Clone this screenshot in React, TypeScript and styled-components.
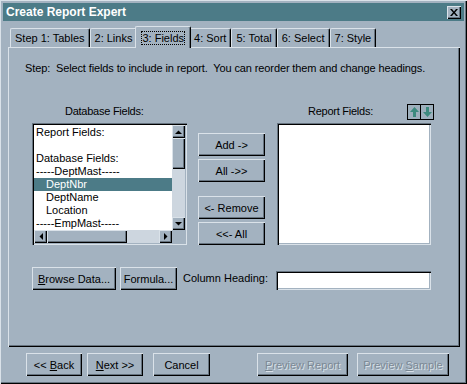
import React from "react";
import styled, { createGlobalStyle } from "styled-components";

const BG = "#a3b2c0";
const LIGHT = "#dae2e9";
const DARK = "#66737f";
const TEAL = "#4c7b87";

const GlobalStyle = createGlobalStyle`
  body {
    margin: 0;
    background: ${BG};
    font-family: "Liberation Sans", Arial, sans-serif;
    font-size: 11px;
    color: #000;
  }
`;

const Window = styled.div`
  width: 467px;
  height: 384px;
  box-sizing: border-box;
  padding: 3px;
  background: ${BG};
  box-shadow: inset 1px 1px ${LIGHT}, inset -1px -1px #000, inset -2px -2px ${DARK};
  display: flex;
  flex-direction: column;
`;

const TitleBar = styled.div`
  height: 18px;
  background: ${TEAL};
  color: #fff;
  font-weight: bold;
  font-size: 12px;
  display: flex;
  align-items: center;
  justify-content: space-between;
  padding: 0 3px 0 3px;
`;

const CloseBox = styled.div`
  width: 14px;
  height: 13px;
  background: ${BG};
  box-shadow: inset 1px 1px ${LIGHT}, inset -1px -1px #000, inset -2px -2px ${DARK};
  display: flex;
  align-items: center;
  justify-content: center;
`;

const Body = styled.div`
  padding: 5px 4px 0 5px;
  display: flex;
  flex-direction: column;
`;

const TabRow = styled.div`
  display: flex;
  height: 21px;
  padding-left: 2px;
`;

const Tab = styled.div<{ $active?: boolean }>`
  position: relative;
  z-index: ${(p) => (p.$active ? 1 : 0)};
  height: ${(p) => (p.$active ? 21 : 18)}px;
  margin: ${(p) => (p.$active ? "0 -2px -1px -2px" : "2px 0 0 0")};
  padding: 0 ${(p) => (p.$active ? 6 : 4)}px;
  background: ${BG};
  border-top: 1px solid ${LIGHT};
  border-left: 1px solid ${LIGHT};
  border-right: 1px solid #000;
  box-shadow: inset -1px 0 ${DARK};
  border-radius: 2px 2px 0 0;
  display: flex;
  align-items: center;
  font-size: 11px;
  white-space: nowrap;
`;

const Focus = styled.span`
  outline: 1px dotted #000;
  outline-offset: 0;
  line-height: 12px;
`;

const Panel = styled.div`
  width: 452px;
  height: 300px;
  box-sizing: border-box;
  padding: 15px 0 0 17px;
  box-shadow: inset 1px 1px ${LIGHT}, inset -1px -1px #000, inset -2px -2px ${DARK};
`;

const StepText = styled.div`
  line-height: 13px;
  white-space: pre;
  letter-spacing: -0.12px;
`;

const MainRow = styled.div`
  display: flex;
  margin: 29px 0 0 7px;
`;

const Column = styled.div<{ $w: number }>`
  width: ${(p) => p.$w}px;
  display: flex;
  flex-direction: column;
`;

const LabelRow = styled.div<{ $pad?: number }>`
  height: 15px;
  margin-bottom: 4px;
  display: flex;
  align-items: center;
  padding-left: ${(p) => p.$pad ?? 0}px;
`;

const Label = styled.span`
  line-height: 13px;
  letter-spacing: -0.25px;
`;

const ListBox = styled.div`
  height: 122px;
  box-sizing: border-box;
  padding: 2px;
  background: #fff;
  box-shadow: inset 1px 1px ${DARK}, inset 2px 2px #000, inset -1px -1px ${LIGHT}, inset -2px -2px ${BG};
  display: grid;
  grid-template-columns: 1fr 13px;
  grid-template-rows: 1fr 13px;
`;

const Items = styled.div`
  overflow: hidden;
  padding-top: 1px;
`;

const Item = styled.div<{ $indent?: boolean; $selected?: boolean }>`
  height: 13px;
  line-height: 13px;
  padding-left: ${(p) => (p.$indent ? 12 : 2)}px;
  background: ${(p) => (p.$selected ? TEAL : "transparent")};
  color: ${(p) => (p.$selected ? "#fff" : "#000")};
  white-space: nowrap;
`;

const VScroll = styled.div`
  display: flex;
  flex-direction: column;
  background: #cdd6df;
`;

const HScroll = styled.div`
  display: flex;
  background: #cdd6df;
`;

const Corner = styled.div`
  background: ${BG};
`;

const ScrollBtn = styled.div`
  width: 13px;
  height: 13px;
  flex: none;
  box-sizing: border-box;
  background: ${BG};
  box-shadow: inset 1px 1px ${LIGHT}, inset -1px -1px #000, inset -2px -2px ${DARK};
  display: flex;
  align-items: center;
  justify-content: center;
`;

const Thumb = styled.div<{ $len: number; $vertical?: boolean }>`
  flex: none;
  width: ${(p) => (p.$vertical ? "13px" : `${p.$len}px`)};
  height: ${(p) => (p.$vertical ? `${p.$len}px` : "13px")};
  background: ${BG};
  box-shadow: inset 1px 1px ${LIGHT}, inset -1px -1px #000, inset -2px -2px ${DARK};
`;

const Track = styled.div`
  flex: 1;
`;

const Button = styled.button<{ $w: number; $h?: number; $disabled?: boolean }>`
  width: ${(p) => p.$w}px;
  height: ${(p) => p.$h ?? 23}px;
  flex: none;
  padding: 0;
  border: none;
  background: ${BG};
  font-family: "Liberation Sans", Arial, sans-serif;
  font-size: 11px;
  color: ${(p) => (p.$disabled ? "#7b8894" : "#000")};
  text-shadow: ${(p) => (p.$disabled ? `1px 1px ${LIGHT}` : "none")};
  box-shadow: inset 1px 1px ${LIGHT}, inset -1px -1px #000, inset -2px -2px ${DARK};
  display: flex;
  align-items: center;
  justify-content: center;
  white-space: pre;
`;

const ButtonStack = styled.div`
  display: flex;
  flex-direction: column;
  gap: 3px;
  padding-top: 29px;
  width: 67px;
  margin: 0 12px 0 11px;
`;

const Spacer = styled.div<{ $h: number }>`
  height: ${(p) => p.$h}px;
`;

const ArrowPair = styled.div`
  margin-left: auto;
  margin-right: -3px;
  display: flex;
  border: 1px solid #000;
  background: #9eb0bd;
`;

const ArrowCell = styled.div<{ $first?: boolean }>`
  width: 12px;
  height: 14px;
  border-left: ${(p) => (p.$first ? "none" : "1px solid #000")};
  display: flex;
  align-items: center;
  justify-content: center;
`;

const BottomRow = styled.div`
  display: flex;
  align-items: flex-end;
  width: 399px;
  margin: 22px 0 0 7px;
`;

const HeadingLabel = styled.span`
  align-self: center;
  margin-left: 6px;
  line-height: 13px;
`;

const TextInput = styled.div`
  width: 155px;
  height: 19px;
  margin-left: auto;
  box-sizing: border-box;
  background: #fff;
  box-shadow: inset 1px 1px ${DARK}, inset 2px 2px #000, inset -1px -1px ${LIGHT}, inset -2px -2px ${BG};
`;

const Footer = styled.div`
  display: flex;
  margin-top: 6px;
  padding-left: 18px;
`;

const Gap = styled.div<{ $w: number }>`
  width: ${(p) => p.$w}px;
  flex: none;
`;

type Dir = "up" | "down" | "left" | "right";

function Tri({ dir }: { dir: Dir }) {
  const pts: Record<Dir, string> = {
    up: "0,4 7,4 3.5,0.5",
    down: "0,0 7,0 3.5,3.5",
    left: "4,0 4,7 0.5,3.5",
    right: "0,0 0,7 3.5,3.5",
  };
  const vertical = dir === "up" || dir === "down";
  return (
    <svg width={vertical ? 7 : 4} height={vertical ? 4 : 7} viewBox={vertical ? "0 0 7 4" : "0 0 4 7"}>
      <polygon points={pts[dir]} fill="#000" />
    </svg>
  );
}

function MoveArrow({ up }: { up?: boolean }) {
  return (
    <svg width="9" height="10" viewBox="0 0 9 10">
      <g transform={up ? "" : "rotate(180 4.5 5)"}>
        <polygon points="4.5,0 9,5 6,5 6,10 3,10 3,5 0,5" fill="#3d8a7e" />
      </g>
    </svg>
  );
}

function Scrollbars() {
  return (
    <>
      <VScroll>
        <ScrollBtn>
          <Tri dir="up" />
        </ScrollBtn>
        <Thumb $vertical $len={31} />
        <Track />
        <ScrollBtn>
          <Tri dir="down" />
        </ScrollBtn>
      </VScroll>
      <HScroll>
        <ScrollBtn>
          <Tri dir="left" />
        </ScrollBtn>
        <Thumb $len={80} />
        <Track />
        <ScrollBtn>
          <Tri dir="right" />
        </ScrollBtn>
      </HScroll>
      <Corner />
    </>
  );
}

const tabs = ["Step 1: Tables", "2: Links", "3: Fields", "4: Sort", "5: Total", "6: Select", "7: Style"];

export default function App() {
  return (
    <>
      <GlobalStyle />
      <Window>
        <TitleBar>
          <span>Create Report Expert</span>
          <CloseBox>
            <svg width="8" height="7" viewBox="0 0 8 7">
              <path d="M0 0 L2 0 L4 2.5 L6 0 L8 0 L5 3.5 L8 7 L6 7 L4 4.5 L2 7 L0 7 L3 3.5 Z" fill="#000" />
            </svg>
          </CloseBox>
        </TitleBar>
        <Body>
          <TabRow>
            {tabs.map((t) =>
              t === "3: Fields" ? (
                <Tab key={t} $active>
                  <Focus>{t}</Focus>
                </Tab>
              ) : (
                <Tab key={t}>{t}</Tab>
              )
            )}
          </TabRow>
          <Panel>
            <StepText>Step:  Select fields to include in report.  You can reorder them and change headings.</StepText>
            <MainRow>
              <Column $w={155}>
                <LabelRow $pad={33}>
                  <Label>Database Fields:</Label>
                </LabelRow>
                <ListBox>
                  <Items>
                    <Item>Report Fields:</Item>
                    <Item />
                    <Item>Database Fields:</Item>
                    <Item>-----DeptMast-----</Item>
                    <Item $indent $selected>
                      DeptNbr
                    </Item>
                    <Item $indent>DeptName</Item>
                    <Item $indent>Location</Item>
                    <Item>-----EmpMast-----</Item>
                  </Items>
                  <Scrollbars />
                </ListBox>
              </Column>
              <ButtonStack>
                <Button $w={67}>Add -&gt;</Button>
                <Button $w={67}>All -&gt;&gt;</Button>
                <Spacer $h={8} />
                <Button $w={67}>&lt;- Remove</Button>
                <Button $w={67}>&lt;&lt;- All</Button>
              </ButtonStack>
              <Column $w={154}>
                <LabelRow $pad={31}>
                  <Label>Report Fields:</Label>
                  <ArrowPair>
                    <ArrowCell $first>
                      <MoveArrow up />
                    </ArrowCell>
                    <ArrowCell>
                      <MoveArrow />
                    </ArrowCell>
                  </ArrowPair>
                </LabelRow>
                <ListBox />
              </Column>
            </MainRow>
            <BottomRow>
              <Button $w={84}>
                <span>
                  <u>B</u>rowse Data...
                </span>
              </Button>
              <Gap $w={4} />
              <Button $w={57}>Formula...</Button>
              <HeadingLabel>Column Heading:</HeadingLabel>
              <TextInput />
            </BottomRow>
          </Panel>
          <Footer>
            <Button $w={56}>
              <span>
                &lt;&lt; <u>B</u>ack
              </span>
            </Button>
            <Gap $w={5} />
            <Button $w={56}>
              <span>
                <u>N</u>ext &gt;&gt;
              </span>
            </Button>
            <Gap $w={10} />
            <Button $w={57}>Cancel</Button>
            <Gap $w={47} />
            <Button $w={91} $disabled>
              <span>
                <u>P</u>review Report
              </span>
            </Button>
            <Gap $w={9} />
            <Button $w={92} $disabled>
              <span>
                Preview <u>S</u>ample
              </span>
            </Button>
          </Footer>
        </Body>
      </Window>
    </>
  );
}
